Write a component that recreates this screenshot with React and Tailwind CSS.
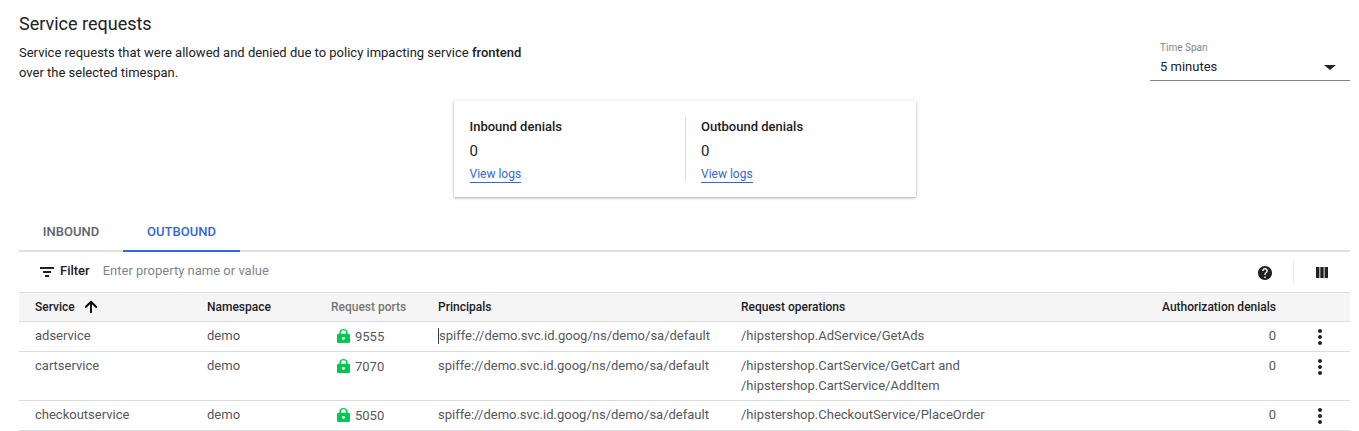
import { ArrowUp } from 'lucide-react';

const rows = [
  { service: 'adservice', port: '9555', ops: ['/hipstershop.AdService/GetAds'], cursor: true },
  { service: 'cartservice', port: '7070', ops: ['/hipstershop.CartService/GetCart and', '/hipstershop.CartService/AddItem'] },
  { service: 'checkoutservice', port: '5050', ops: ['/hipstershop.CheckoutService/PlaceOrder'] },
];

const gridCols = 'grid grid-cols-[172px_124px_107px_303px_1fr_160px_74px] pl-4';

const LockIcon = () => (
  <svg viewBox="4 1 16 21" preserveAspectRatio="none" className="w-[13px] h-[14px] fill-[#00c853]">
    <path d="M18 8h-1V6c0-2.76-2.24-5-5-5S7 3.24 7 6v2H6c-1.1 0-2 .9-2 2v10c0 1.1.9 2 2 2h12c1.1 0 2-.9 2-2V10c0-1.1-.9-2-2-2zm-6 9c-1.1 0-2-.9-2-2s.9-2 2-2 2 .9 2 2-.9 2-2 2zm3.1-9H8.9V6c0-1.71 1.39-3.1 3.1-3.1 1.71 0 3.1 1.39 3.1 3.1v2z" />
  </svg>
);

const MoreIcon = () => (
  <svg viewBox="0 0 24 24" className="w-6 h-6 shrink-0 fill-[#202124]">
    <path d="M12 8c1.1 0 2-.9 2-2s-.9-2-2-2-2 .9-2 2 .9 2 2 2zm0 2c-1.1 0-2 .9-2 2s.9 2 2 2 2-.9 2-2-.9-2-2-2zm0 6c-1.1 0-2 .9-2 2s.9 2 2 2 2-.9 2-2-.9-2-2-2z" />
  </svg>
);

const DenialStat = ({ title }) => (
  <div className="flex-1 pl-4">
    <div className="text-[13px] leading-[20px] font-medium text-[#202124]">{title}</div>
    <div className="text-[15px] leading-[20px] mt-[4px] text-[#202124]">0</div>
    <a className="inline-block text-[12px] leading-[15px] mt-[4px] text-[#3367d6] border-b border-[#3367d6]">View logs</a>
  </div>
);

export default function App() {
  return (
    <div className="w-[1359px] h-[431px] overflow-hidden bg-white pl-[19px] pr-[9px] font-['Roboto',sans-serif] text-[#202124]">
      {/* heading */}
      <div className="flex justify-between h-[101px] pt-[12px]">
        <div>
          <h1 className="text-[18px] leading-[24px]">Service requests</h1>
          <p className="text-[13px] leading-[20px] mt-[7px] w-[520px]">
            Service requests that were allowed and denied due to policy impacting service <span className="font-medium">frontend</span> over the selected timespan.
          </p>
        </div>
        <div className="w-[200px] mt-[30px]">
          <div className="text-[10px] leading-[12px] text-[#80868b] pl-[10px]">Time Span</div>
          <div className="flex items-center justify-between h-[27px] pl-[10px] pr-[14px] border-b border-[#80868b] text-[13px]">
            <span>5 minutes</span>
            <span className="w-0 h-0 border-x-[6px] border-x-transparent border-t-[5px] border-t-[#202124]" />
          </div>
        </div>
      </div>

      {/* denial card */}
      <div className="flex w-[462px] h-[96px] mx-auto pt-[16px] pb-[16px] bg-white shadow-[0_1px_2px_rgba(60,64,67,0.4),0_0_6px_rgba(60,64,67,0.1)]">
        <div className="w-[232px] border-r border-[#dadce0]"><DenialStat title="Inbound denials" /></div>
        <div className="flex-1 -ml-[0.5px]"><DenialStat title="Outbound denials" /></div>
      </div>

      {/* tabs */}
      <div className="flex mt-[17px] h-[38px] border-b-2 border-[#e0e0e0]">
        <div className="w-[104px] h-[38px] pb-[1px] flex items-center justify-center text-[13px] font-medium text-[#5f6368] border-b-2 border-transparent">INBOUND</div>
        <div className="w-[117px] h-[38px] pb-[1px] flex items-center justify-center text-[13px] font-medium text-[#3367d6] border-b-2 border-[#3367d6]">OUTBOUND</div>
      </div>

      {/* filter bar */}
      <div className="flex items-center h-[40px] pl-[21px]">
        <svg viewBox="0 0 14 10" className="w-[14px] h-[10px] fill-[#202124]">
          <path d="M0 0h14v2H0zM3 4h8v2H3zM5 8h4v2H5z" />
        </svg>
        <span className="ml-[6px] mb-[2px] text-[13px] font-medium">Filter</span>
        <span className="ml-[13px] mb-[2px] text-[13px] text-[#80868b]">Enter property name or value</span>
        <svg viewBox="2 2 20 20" className="w-[14px] h-[14px] fill-[#202124] ml-auto mr-[21px] mt-[2px]">
          <path d="M12 2C6.48 2 2 6.48 2 12s4.48 10 10 10 10-4.48 10-10S17.52 2 12 2zm1 17h-2v-2h2v2zm2.07-7.75l-.9.92C13.45 12.9 13 13.5 13 15h-2v-.5c0-1.1.45-2.1 1.17-2.83l1.24-1.26c.37-.36.59-.86.59-1.41 0-1.1-.9-2-2-2s-2 .9-2 2H8c0-2.21 1.79-4 4-4s4 1.79 4 4c0 .88-.36 1.68-.93 2.25z" />
        </svg>
        <div className="w-px h-[24px] bg-[#e8eaed]" />
        <svg viewBox="0 0 12 11" className="w-[12px] h-[11px] fill-[#202124] ml-[22px] mr-[22px] mt-[1px]">
          <path d="M0 0h3.4v11H0zM4.3 0h3.4v11H4.3zM8.6 0H12v11H8.6z" />
        </svg>
      </div>

      {/* table */}
      <div className={`${gridCols} h-[30px] items-center bg-[#f5f5f5] border-y border-[#dadce0] text-[12px] font-medium`}>
        <div className="flex items-center">
          Service
          <ArrowUp size={18} strokeWidth={2.4} className="ml-[7px] text-black" />
        </div>
        <div>Namespace</div>
        <div className="text-[#757575]">Request ports</div>
        <div>Principals</div>
        <div>Request operations</div>
        <div className="text-right">Authorization denials</div>
        <div />
      </div>
      {rows.map((row) => (
        <div key={row.service} className={`${gridCols} border-b border-[#dadce0] text-[13px] leading-[20px] text-[#54585d] pt-[4px] pb-[5px]`}>
          <div>{row.service}</div>
          <div>demo</div>
          <div className="flex items-center h-[20px] pl-[6px]">
            <LockIcon />
            <span className="ml-[5px] mt-[1px]">{row.port}</span>
          </div>
          <div className={row.cursor ? 'border-l border-[#3c4043] h-[16px] mt-[2px] leading-[16px] w-fit' : ''}>spiffe://demo.svc.id.goog/ns/demo/sa/default</div>
          <div className={row.ops.length > 1 ? '-mb-px' : ''}>
            {row.ops.map((op) => <div key={op}>{op}</div>)}
          </div>
          <div className="text-right">0</div>
          <div className="flex justify-end pr-[18px] h-[20px] pt-[2px] items-center"><MoreIcon /></div>
        </div>
      ))}
    </div>
  );
}
